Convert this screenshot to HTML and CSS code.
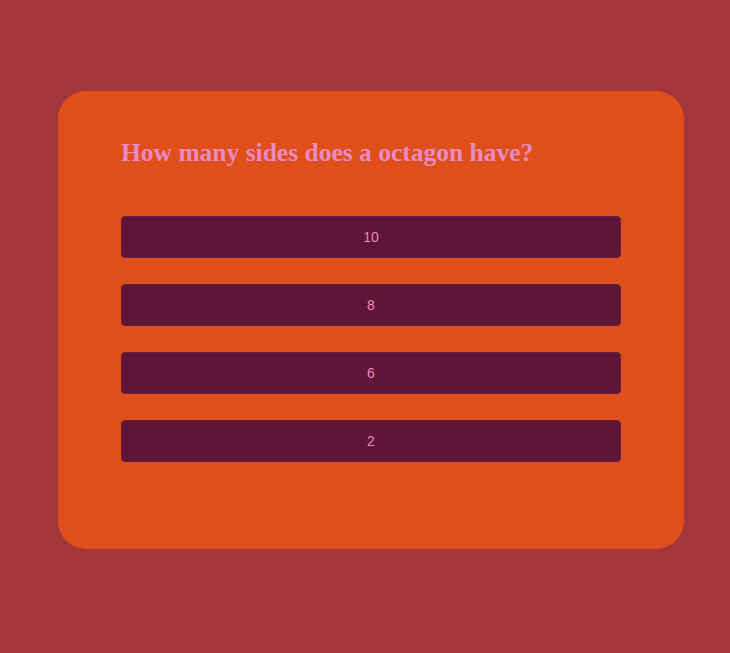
FILE: index.html
```html
<!DOCTYPE html>
<html>
<head>
<meta charset="utf-8">
<link rel="stylesheet" href="styles.css">
</head>
<body>
<div class="page">
  <div class="card">
    <h2 class="question">How many sides does a octagon have?</h2>
    <div class="answers">
      <button class="answer">10</button>
      <button class="answer">8</button>
      <button class="answer">6</button>
      <button class="answer">2</button>
    </div>
  </div>
</div>
</body>
</html>
```
FILE: styles.css
```css
html, body {
  margin: 0;
  padding: 0;
  background: #a3363a;
}
.page {
  padding: 91px 46px 0 58px;
}
.card {
  width: 626px;
  height: 458px;
  box-sizing: border-box;
  background: #e04e1a;
  border-radius: 28px;
  padding: 48px 63px 0 63px;
}
.question {
  margin: 0;
  font-family: "Liberation Serif", "Times New Roman", serif;
  font-weight: bold;
  font-size: 25.5px;
  line-height: 28px;
  color: #e78bc2;
}
.answers {
  margin-top: 49px;
  display: flex;
  flex-direction: column;
  gap: 26px;
}
.answer {
  height: 42px;
  width: 100%;
  background: #5e1537;
  border: 1px solid #6a1d3a;
  border-radius: 4px;
  color: #e88ac0;
  font-family: "Liberation Sans", Arial, sans-serif;
  font-size: 14px;
  padding: 0;
}
```
